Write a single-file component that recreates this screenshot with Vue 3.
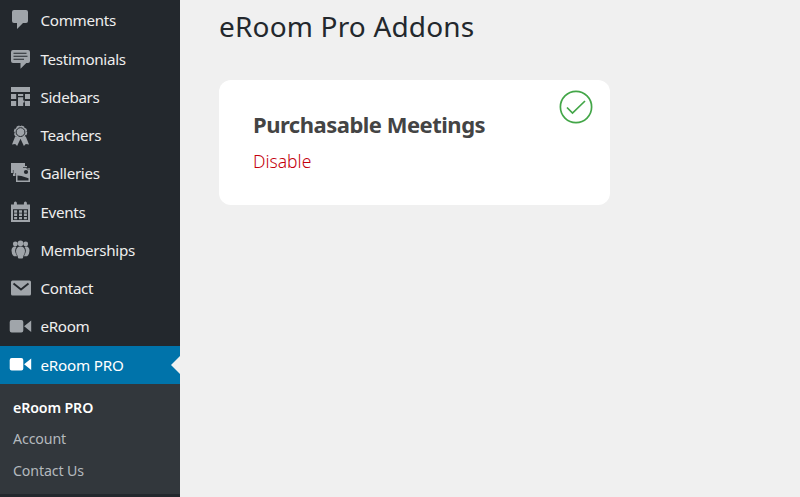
<script setup>
const items = [
  { label: 'Comments', icon: 'comment' },
  { label: 'Testimonials', icon: 'testimonial' },
  { label: 'Sidebars', icon: 'layout' },
  { label: 'Teachers', icon: 'award' },
  { label: 'Galleries', icon: 'gallery' },
  { label: 'Events', icon: 'calendar' },
  { label: 'Memberships', icon: 'groups' },
  { label: 'Contact', icon: 'mail' },
  { label: 'eRoom', icon: 'video' },
  { label: 'eRoom PRO', icon: 'video', active: true },
]
const subItems = [
  { label: 'eRoom PRO', current: true },
  { label: 'Account' },
  { label: 'Contact Us' },
]
</script>

<template>
  <div class="page">
    <aside class="sidebar">
      <nav class="menu">
        <a v-for="item in items" :key="item.label" class="item" :class="[item.icon, { active: item.active }]">
          <svg class="icon" viewBox="0 0 24 24" fill="currentColor">
            <path v-if="item.icon === 'comment'" d="M6 1h12q2 0 2 2v9q0 2-2 2h-3l-6 6v-6H6q-2 0-2-2V3q0-2 2-2z" />
            <path v-else-if="item.icon === 'testimonial'" fill-rule="evenodd" d="M5 2.900h15q2 0 2 2v9.200q0 2-2 2h-1.700l-5.800 5.700v-5.700H5q-2 0-2-2V4.900q0-2 2-2zM5.500 5.700v1.100h13V5.700zM5.500 8.700v1.100h14V8.700zM5.500 11.700v1.100H16v-1.100z" />
            <path v-else-if="item.icon === 'layout'" d="M3 2h19v5H3zM3 9h5.200v5H3zM10 9h5.200v1.900H10zM17 9h5v5h-5zM3 16h5.200v5H3zM10 12.200h5.200V21H10zM17 16h5v5h-5zM15 15.500h1.500v2H15z" />
            <template v-else-if="item.icon === 'award'">
              <path d="M7.200 12.500 4 20.600l3.200-.5 1.900 1.900 3.400-7.300 3.400 7.300 1.900-1.900 3.200.5-3.200-8.100z" />
              <circle cx="12.500" cy="8.100" r="6" stroke="currentColor" stroke-width="1.400" stroke-dasharray="3 1.700" />
              <circle cx="12.500" cy="8.100" r="4.400" fill="none" stroke="#23282d" stroke-width="1" />
            </template>
            <template v-else-if="item.icon === 'gallery'">
              <path d="M3 1h14v4H6v6H3z" />
              <path d="M5 4h14v4H8v6H5z" />
              <path d="M8 6h14v14H8z" />
              <path d="M5.300 8v4M7.600 11v4" stroke="#23282d" stroke-width=".6" />
              <path d="m9.500 13.500 4 .5 7 2.300v2.200h-11z" fill="#23282d" />
              <circle cx="18" cy="10" r="2.100" fill="#23282d" />
              <path d="M15 5.500h4V7h3" fill="none" stroke="#23282d" stroke-width=".7" />
            </template>
            <path v-else-if="item.icon === 'calendar'" fill-rule="evenodd" d="M3 4.500h2.900V3.200q0-1.600 1.500-1.600t1.500 1.600v1.300h7V3.200q0-1.600 1.500-1.600t1.500 1.600v1.300H22V22H3zM5 9.300V20h15V9.300zM6.100 10.200h3v2.500h-3zM11 10.200h3v2.500h-3zM15.900 10.200h3v2.500h-3zM6.100 13.600h3v2.500h-3zM11 13.600h3v2.500h-3zM15.900 13.600h3v2.500h-3zM6.100 17h3v2.200h-3zM11 17h3v2.200h-3zM15.900 17h3v2.200h-3z" />
            <template v-else-if="item.icon === 'groups'">
              <circle cx="12.500" cy="5.300" r="2.900" />
              <circle cx="7.300" cy="6" r="2.400" />
              <circle cx="17.700" cy="6" r="2.400" />
              <path d="M6.700 8.600q-3 .3-3.200 4 0 4.300 2.500 5.600h3.200Q5.500 13 8.500 9zM18.300 8.600q3 .3 3.200 4 0 4.300-2.500 5.600h-3.200q3.700-5.200.7-9.200z" />
              <path d="M12.500 8.500q4.400.2 4.500 4.800-.3 3.500-1.500 4.200l-.6 2.700q-2.400.7-4.800 0l-.6-2.700Q8.200 16.800 8 13.300q.1-4.600 4.500-4.800z" />
            </template>
            <template v-else-if="item.icon === 'mail'">
              <rect x="3" y="3.400" width="20" height="15" rx="1.500" />
              <path d="m5.500 6.500 7.500 6 7.500-6" fill="none" stroke="#23282d" stroke-width="1.900" />
            </template>
            <path v-else d="M3.700 5h9.600q2 0 2 2v8.400q0 2-2 2H3.700q-2 0-2-2V7q0-2 2-2zM23.200 5.500v11.400l-7.100-5.700z" />
          </svg>
          <span class="label">{{ item.label }}</span>
        </a>
      </nav>
      <div class="submenu">
        <a v-for="sub in subItems" :key="sub.label" class="sub" :class="{ current: sub.current }">{{ sub.label }}</a>
      </div>
    </aside>
    <main class="content">
      <h1 class="title">eRoom Pro Addons</h1>
      <section class="card">
        <div>
          <h2 class="name">Purchasable Meetings</h2>
          <a class="disable">Disable</a>
        </div>
        <svg class="check" viewBox="0 0 34 34" fill="none" stroke="#43a648">
          <circle cx="17" cy="17" r="15.600" stroke-width="1.700" />
          <path d="m8 17.500 5.500 5.500L26 11" stroke-width="1.700" />
        </svg>
      </section>
    </main>
  </div>
</template>

<style>
body { margin: 0; background: #f0f0f0; }
</style>

<style scoped>
.page { display: flex; height: 497px; overflow: hidden; background: #f0f0f0; font-family: "Noto Sans", "Open Sans", sans-serif; }
.sidebar { width: 180px; flex: none; background: #23282d; }
.menu { padding-top: 1.750px; }
.item { display: flex; align-items: center; height: 38.250px; padding-left: 8px; color: #eee; position: relative; }
.icon { width: 24px; height: 24px; flex: none; color: #a0a5aa; }
.label { margin: 0 0 1px 8.500px; font-size: 15.200px; line-height: 20px; letter-spacing: -0.320px; white-space: nowrap; }
.active { background: #0073aa; color: #fff; }
.active .icon { color: #fff; }
.active .label { letter-spacing: -0.200px; }
.active::after { content: ""; position: absolute; right: 0; top: 50%; margin-top: -9px; border: 9px solid transparent; border-left: 0; border-right-color: #f0f0f0; }
.submenu { box-sizing: border-box; height: 110px; padding: 7.500px 0 0 13px; background: #32373c; }
.sub { display: block; height: 31.500px; line-height: 31.500px; font-size: 14.200px; letter-spacing: -0.120px; color: #b4b9be; }
.current { color: #fff; font-weight: 600; }
.content { padding-left: 39px; }
.title { margin: 0; height: 80px; padding-top: 6px; box-sizing: border-box; font-size: 28px; line-height: 40px; font-weight: 450; letter-spacing: 0.170px; color: #23282d; }
.card { display: flex; justify-content: space-between; box-sizing: border-box; width: 391px; height: 125px; padding: 29px 17.500px 0 34px; border-radius: 12px; background: #fff; }
.name { margin: 0; font-size: 22px; line-height: 30px; font-weight: 700; letter-spacing: -0.500px; color: #444; white-space: nowrap; }
.disable { display: block; margin-top: 10px; font-size: 17.500px; line-height: 24px; font-weight: 300; color: #c4000c; }
.check { width: 34px; height: 34px; margin-top: -18.800px; }
</style>
